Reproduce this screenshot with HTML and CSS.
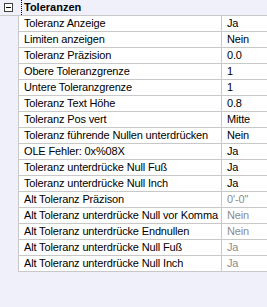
FILE: index.html
```html
<!DOCTYPE html>
<html>
<head>
  <title>Eigenschaften</title>
  <link rel="stylesheet" href="styles.css">
</head>
<body>
  <div class="grid">
    <div class="category">
      <span class="toggle"></span>
      <span class="category-name">Toleranzen</span>
    </div>

    <div class="row"><div class="name">Toleranz Anzeige</div><div class="value">Ja</div></div>
    <div class="row"><div class="name">Limiten anzeigen</div><div class="value">Nein</div></div>
    <div class="row"><div class="name">Toleranz Präzision</div><div class="value">0.0</div></div>
    <div class="row"><div class="name">Obere Toleranzgrenze</div><div class="value">1</div></div>
    <div class="row"><div class="name">Untere Toleranzgrenze</div><div class="value">1</div></div>
    <div class="row"><div class="name">Toleranz Text Höhe</div><div class="value">0.8</div></div>
    <div class="row"><div class="name">Toleranz Pos vert</div><div class="value">Mitte</div></div>
    <div class="row"><div class="name">Toleranz führende Nullen unterdrücken</div><div class="value">Nein</div></div>
    <div class="row"><div class="name">OLE Fehler: 0x%08X</div><div class="value">Ja</div></div>
    <div class="row"><div class="name">Toleranz unterdrücke Null Fuß</div><div class="value">Ja</div></div>
    <div class="row"><div class="name">Toleranz unterdrücke Null Inch</div><div class="value">Ja</div></div>
    <div class="row"><div class="name">Alt Toleranz Präzison</div><div class="value disabled">0'-0"</div></div>
    <div class="row"><div class="name">Alt Toleranz unterdrücke Null vor Komma</div><div class="value disabled">Nein</div></div>
    <div class="row"><div class="name">Alt Toleranz unterdrücke Endnullen</div><div class="value disabled">Nein</div></div>
    <div class="row"><div class="name">Alt Toleranz unterdrücke Null Fuß</div><div class="value disabled">Ja</div></div>
    <div class="row"><div class="name">Alt Toleranz unterdrücke Null Inch</div><div class="value disabled">Ja</div></div>
  </div>
</body>
</html>
```

FILE: styles.css
```css
body {
  margin: 0;
  background: #f0f0fa;
  font-family: 'Liberation Sans', Arial, sans-serif;
  font-size: 11px;
  letter-spacing: -0.15px;
  color: #000;
}

.grid {
  width: 267px;
}

.category {
  display: flex;
  align-items: center;
  height: 16px;
  border-bottom: 1px solid #c8c8c8;
  box-sizing: border-box;
}

.toggle {
  position: relative;
  width: 9px;
  height: 9px;
  margin-left: 4px;
  margin-right: 8px;
  border: 1px solid #404040;
  box-sizing: border-box;
  background: #fff;
}

.toggle::after {
  content: "";
  position: absolute;
  left: 1px;
  top: 3px;
  width: 5px;
  height: 1px;
  background: #000;
}

.category-name {
  font-weight: bold;
  letter-spacing: 0;
  padding-left: 2px;
  border-left: 1px dotted #000;
  line-height: 15px;
}

.row {
  display: grid;
  grid-template-columns: 203px 1fr;
  height: 16px;
  margin-left: 18px;
  background: #fff;
  border-left: 1px solid #c8c8c8;
  border-bottom: 1px solid #c8c8c8;
  box-sizing: border-box;
}

.name {
  padding-left: 5px;
  line-height: 15px;
  white-space: nowrap;
  overflow: hidden;
  border-right: 1px solid #c8c8c8;
}

.value {
  padding-left: 5px;
  line-height: 15px;
  white-space: nowrap;
  overflow: hidden;
}

.disabled {
  color: #8c8c8c;
}
```
